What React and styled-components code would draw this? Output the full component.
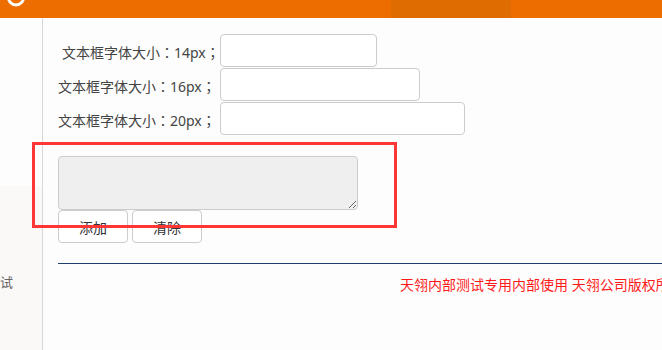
import React from "react";
import styled, { createGlobalStyle } from "styled-components";

const Global = createGlobalStyle`
  html, body { margin: 0; padding: 0; background: #fdfdfd; }
  body { font-family: "Noto Sans", "Noto Sans CJK SC", sans-serif; }
  * { box-sizing: border-box; }
`;

const Page = styled.div`
  width: 662px;
  height: 350px;
  overflow: hidden;
  display: flex;
  flex-direction: column;
  background: #fdfdfd;
`;

const TopBar = styled.div`
  height: 18px;
  flex: none;
  background: #ee6d00;
  display: flex;
`;

const LogoArea = styled.div`
  width: 391px;
  height: 100%;
  display: flex;
  align-items: flex-start;
`;

const NavItem = styled.div`
  width: 120px;
  height: 100%;
  background: ${(p) => (p.active ? "#de6c00" : "transparent")};
`;

const Body = styled.div`
  flex: 1;
  display: flex;
  min-height: 0;
`;

const Sidebar = styled.div`
  width: 43px;
  flex: none;
  border-right: 1px solid #d8d8d8;
  display: flex;
  flex-direction: column;
`;

const SideTop = styled.div`
  height: 168px;
  background: #fdfdfd;
`;

const SideBottom = styled.div`
  flex: 1;
  background: #fbf9f7;
  padding-top: 87px;
`;

const SideText = styled.div`
  font-size: 13px;
  color: #666;
  line-height: 18px;
  white-space: nowrap;
`;

const Main = styled.div`
  flex: 1;
  position: relative;
  padding: 16px 0 0 15px;
  display: flex;
  flex-direction: column;
  min-width: 0;
`;

const Form = styled.div`
  display: flex;
  flex-direction: column;
  gap: 1px;
`;

const Row = styled.div`
  display: flex;
  align-items: center;
`;

const Label = styled.span`
  width: 162px;
  flex: none;
  padding-left: ${(p) => p.indent || 0}px;
  padding-top: 3px;
  font-size: 14px;
  color: #444;
  white-space: nowrap;
  text-spacing-trim: space-all;
`;

const Punct = styled.span`
  font-family: "Noto Sans CJK TC", "Noto Sans CJK SC", sans-serif;
  text-spacing-trim: space-all;
`;

const TextInput = styled.input`
  width: ${(p) => p.w}px;
  height: 33px;
  border: 1px solid #cccccc;
  border-radius: 4px;
  background: #fff;
  outline: none;
  padding: 0 6px;
  font-family: inherit;
`;

const TextArea = styled.textarea`
  display: block;
  margin-top: 21px;
  width: 300px;
  height: 54px;
  border: 1px solid #cccccc;
  border-radius: 4px;
  background: #efefef;
  outline: none;
  resize: both;
  font-family: inherit;
`;

const Buttons = styled.div`
  display: flex;
  gap: 4px;
`;

const Button = styled.button`
  width: 70px;
  height: 33px;
  border: 1px solid #cccccc;
  border-radius: 4px;
  background: #fff;
  color: #333;
  font-size: 14px;
  font-family: inherit;
  padding: 0;
`;

const Rule = styled.div`
  margin-top: 20px;
  height: 1px;
  background: #1f3f70;
`;

const Footer = styled.div`
  margin-top: 11px;
  padding-left: 342px;
  font-size: 14px;
  line-height: 20px;
  color: #ff1a1a;
  white-space: nowrap;
  overflow: hidden;
`;

const Highlight = styled.div`
  position: absolute;
  left: -11px;
  top: 124px;
  width: 365px;
  height: 86px;
  border: 3px solid #ff3636;
  pointer-events: none;
`;

const Logo = () => (
  <svg width="32" height="18" viewBox="0 0 32 18">
    <circle cx="16" cy="-2.5" r="7.5" fill="none" stroke="#fff" strokeWidth="3" />
  </svg>
);

export default function App() {
  const rows = [
    { size: "14px", w: 157, indent: 4 },
    { size: "16px", w: 200, indent: 0 },
    { size: "20px", w: 245, indent: 0 },
  ];
  return (
    <>
      <Global />
      <Page>
        <TopBar>
          <LogoArea>
            <Logo />
          </LogoArea>
          <NavItem active />
        </TopBar>
        <Body>
          <Sidebar>
            <SideTop />
            <SideBottom>
              <SideText>试</SideText>
            </SideBottom>
          </Sidebar>
          <Main>
            <Form>
              {rows.map((r) => (
                <Row key={r.size}>
                  <Label indent={r.indent}>
                    文本框字体大小<Punct>：</Punct>
                    {r.size}
                    <Punct>；</Punct>
                  </Label>
                  <TextInput w={r.w} />
                </Row>
              ))}
            </Form>
            <TextArea />
            <Buttons>
              <Button>添加</Button>
              <Button>清除</Button>
            </Buttons>
            <Rule />
            <Footer>天翎内部测试专用内部使用 天翎公司版权所有</Footer>
            <Highlight />
          </Main>
        </Body>
      </Page>
    </>
  );
}
